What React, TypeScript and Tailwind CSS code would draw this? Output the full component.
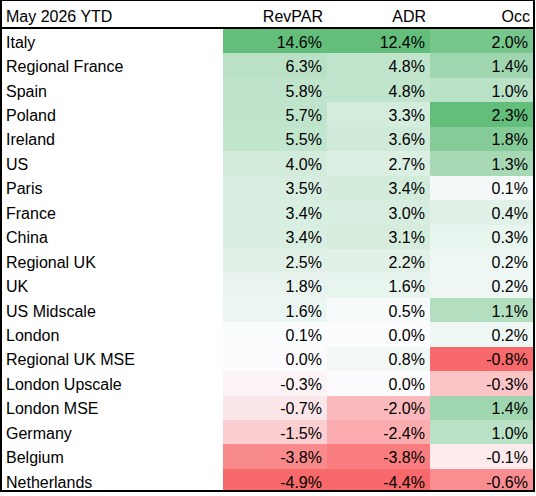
import React from "react";

type Row = [string, number, number, number];

const rows: Row[] = [
  ["Italy", 14.6, 12.4, 2.0],
  ["Regional France", 6.3, 4.8, 1.4],
  ["Spain", 5.8, 4.8, 1.0],
  ["Poland", 5.7, 3.3, 2.3],
  ["Ireland", 5.5, 3.6, 1.8],
  ["US", 4.0, 2.7, 1.3],
  ["Paris", 3.5, 3.4, 0.1],
  ["France", 3.4, 3.0, 0.4],
  ["China", 3.4, 3.1, 0.3],
  ["Regional UK", 2.5, 2.2, 0.2],
  ["UK", 1.8, 1.6, 0.2],
  ["US Midscale", 1.6, 0.5, 1.1],
  ["London", 0.1, 0.0, 0.2],
  ["Regional UK MSE", 0.0, 0.8, -0.8],
  ["London Upscale", -0.3, 0.0, -0.3],
  ["London MSE", -0.7, -2.0, 1.4],
  ["Germany", -1.5, -2.4, 1.0],
  ["Belgium", -3.8, -3.8, -0.1],
  ["Netherlands", -4.9, -4.4, -0.6],
];

const W = [252, 252, 255];
const G = [99, 190, 123];
const R = [248, 105, 107];

function heat(v: number, min: number, max: number): string {
  let t = 0;
  let target = G;
  if (v >= 0) {
    t = max > 0 ? v / max : 0;
    target = G;
  } else {
    t = min < 0 ? v / min : 0;
    target = R;
  }
  const c = W.map((w, i) => Math.round(w + (target[i] - w) * t));
  return `rgb(${c[0]}, ${c[1]}, ${c[2]})`;
}

const cols = [1, 2, 3].map((i) => {
  const vals = rows.map((r) => r[i] as number);
  return { min: Math.min(...vals), max: Math.max(...vals) };
});

export default function App() {
  return (
    <div className="w-[536px] h-[496px] bg-white">
      <div
        className="w-[535px] h-[492px] overflow-hidden border-l-2 border-r-2 border-b-2 border-t border-black text-black text-[16px] leading-none"
        style={{ fontFamily: '"Liberation Sans", Arial, sans-serif' }}
      >
        <div className="flex h-[28px] pt-[6px] items-center border-b-2 border-black bg-white">
          <div className="w-[221px] pl-1">May 2026 YTD</div>
          <div className="w-[104px] text-right pr-[4px]">RevPAR</div>
          <div className="w-[103px] text-right pr-[4px]">ADR</div>
          <div className="w-[103px] text-right pr-[3px]">Occ</div>
        </div>
        {rows.map((r) => (
          <div key={r[0]} className="flex h-[24.44px] shrink-0">
            <div className="w-[221px] pl-1 pt-[3px] flex items-center bg-white">{r[0]}</div>
            {[1, 2, 3].map((i) => (
              <div
                key={i}
                className={`${i === 1 ? "w-[104px]" : "w-[103px]"} flex items-center justify-end pr-[5px] pt-[3px]`}
                style={{ backgroundColor: heat(r[i] as number, cols[i - 1].min, cols[i - 1].max) }}
              >
                {(r[i] as number).toFixed(1)}%
              </div>
            ))}
          </div>
        ))}
      </div>
    </div>
  );
}
